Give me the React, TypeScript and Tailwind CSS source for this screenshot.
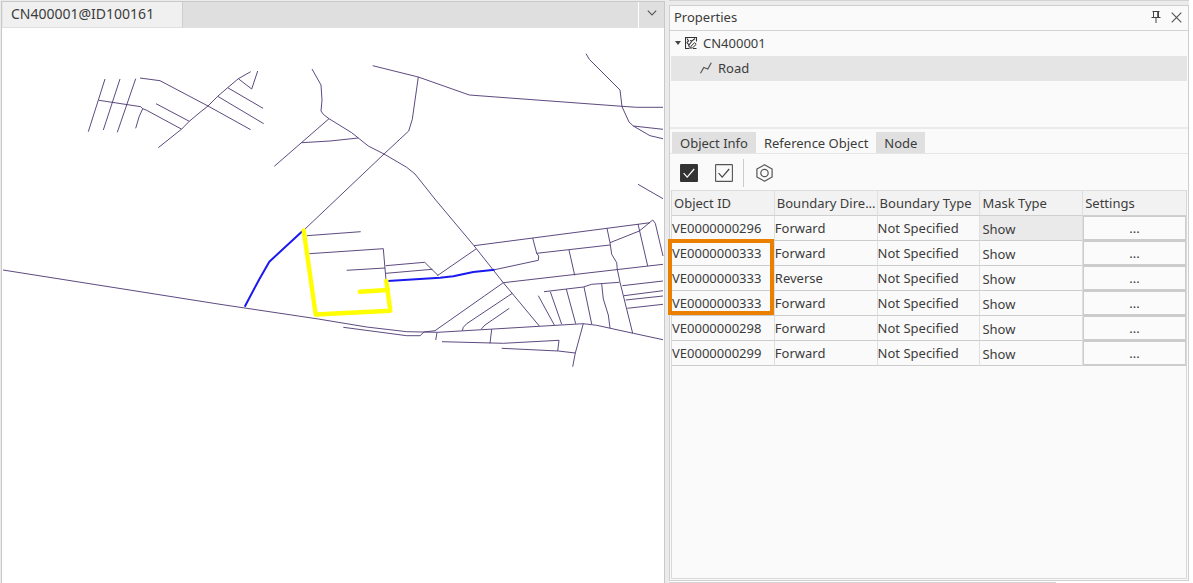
import { useState } from "react";

interface Boundary {
  id: string;
  direction: string;
  type: string;
  mask: string;
}

const COLUMNS = [
  "Object ID",
  "Boundary Dire...",
  "Boundary Type",
  "Mask Type",
  "Settings",
];

const TABS = ["Object Info", "Reference Object", "Node"];

const ROWS: Boundary[] = [
  { id: "VE0000000296", direction: "Forward", type: "Not Specified", mask: "Show" },
  { id: "VE0000000333", direction: "Forward", type: "Not Specified", mask: "Show" },
  { id: "VE0000000333", direction: "Reverse", type: "Not Specified", mask: "Show" },
  { id: "VE0000000333", direction: "Forward", type: "Not Specified", mask: "Show" },
  { id: "VE0000000298", direction: "Forward", type: "Not Specified", mask: "Show" },
  { id: "VE0000000299", direction: "Forward", type: "Not Specified", mask: "Show" },
];

const ROADS = [
  "105,79 88.3,131.7",
  "120,79 103.3,130",
  "135.7,78.7 117.3,132.3",
  "99,100.3 140.7,106.7 142.7,108.7 146.7,110.3 181.3,129",
  "142.7,108.7 139,117 135.7,128.3",
  "140,78 160,80.7 208,106 250.7,129.7",
  "156,103.7 189.3,121.3",
  "158.3,147.7 181.7,129 189.3,121.3 200,112.3 208,106 217.7,96.3 227.7,87.7 238.3,78.7 250.7,71.7",
  "238.3,78.7 251.7,89 257.7,71",
  "227.7,87.7 263,108.3",
  "217.7,96.3 263.7,123.7",
  "312,69 321,85 322,100 321,111 323.3,114.3 329,118.7 351.7,132.7 358.3,138 368.3,146 384,154 406.7,167.3 415,174 435.7,200 474,245.7 503.3,282.7 539.3,326",
  "329,118.7 274.3,166.3",
  "301.7,142.7 330,141 358.3,138",
  "372.7,65.7 418.3,77 469.3,95 500,97.3 622,106.3 636.7,107.3 663,107.3",
  "418.3,77 412.3,119.3 408.7,131 384,154 304,230",
  "586,53.7 589.3,59.3 620,90 622,106.7 629,122 633.3,126 650,135.7 663,138.7",
  "633.3,126 663,129.3",
  "638,184.3 663,198.7",
  "306.7,235.7 360.7,231.7",
  "309.3,253.7 383.3,248.7 386,280",
  "346.7,270.3 385,268",
  "385.7,265.7 424.7,262.3 438.3,275.7",
  "386,273.3 432.3,269.3",
  "437.3,275.7 476,249",
  "494.7,269.7 538.3,260.3 538.7,256 536.7,253.3 532.7,238",
  "474,245.7 650,222.7",
  "610,242.7 639.3,231 652.7,220 655.3,223.3 663,256",
  "536.7,253.3 610,245",
  "569,250 574.7,275.3",
  "607,228.3 610,242.7 611.7,254.3 616.7,262.7 617.3,269.3 620,282.3 632.7,333.3",
  "638,224 647.7,266",
  "503.3,282.7 663,264.3",
  "3,270 220,304.3 318.3,319 366.7,327 406.7,331.7 438,332.3 583.3,323.7 596.7,325.3 633.3,333.3 663,339.7",
  "343.3,327.3 406.7,335.7 420,335.7 424,332 435,330.7 503.3,282.7",
  "462.3,330.7 463.3,327.3 466.7,323.7 512.3,293.3",
  "481.3,329 485,325 509.3,308.3",
  "538.3,295.7 554.3,325",
  "544,291.7 583.3,287 591.7,284.3 619.3,282.3",
  "550.3,291.7 561.7,324.3",
  "566.3,289 575.7,323.7",
  "584,287 591.7,324",
  "601.7,284 603.3,299 608.3,315 610,328",
  "622.3,285.7 663,281",
  "624,295.7 663,290.7",
  "625.7,300 663,296",
  "627.3,308.3 663,304.3",
  "437,332.7 435.7,340",
  "442,341.7 503.3,343.3 559,340.3 557.7,351",
  "491.7,329.3 490,343.3",
  "501.7,348.3 558.3,351 575.3,353",
  "583.3,323.7 575.3,353 572.7,366.7",
];

const BLUE_ROADS = [
  "244.7,306.7 259.3,279.3 269.3,261.7 302.3,231.3",
  "387.7,281 440,277.7 453.3,276.3 473.3,272 494.7,269.7",
];

const YELLOW_ROADS = [
  "303.7,230.5 315.7,314.5 390.3,310.7 386.3,281",
  "359.7,291.7 387.7,290",
];

function RoadMap() {
  return (
    <svg
      viewBox="2 28 662 555"
      preserveAspectRatio="xMinYMin slice"
      className="h-full w-full"
      fill="none"
      role="img"
      aria-label="Road map"
    >
      <g stroke="#4b3570" strokeWidth="0.9">
        {ROADS.map((points) => (
          <polyline key={points} points={points} />
        ))}
      </g>
      <g stroke="#1a1aee" strokeWidth="2" strokeLinejoin="round">
        {BLUE_ROADS.map((points) => (
          <polyline key={points} points={points} />
        ))}
      </g>
      <g stroke="#ffff00" strokeWidth="4.4" strokeLinecap="round" strokeLinejoin="round">
        {YELLOW_ROADS.map((points) => (
          <polyline key={points} points={points} />
        ))}
      </g>
    </svg>
  );
}

function PinIcon() {
  return (
    <svg width="10" height="12" viewBox="0 0 10 12" fill="none" stroke="#444">
      <path d="M1.5 0.5h7M2.5 0.5v6M7.5 0.5v6M0.5 6.5h9M5 7v5" />
      <path d="M6.5 1v5" strokeWidth="0.8" />
    </svg>
  );
}

function CloseIcon() {
  return (
    <svg width="11" height="11" viewBox="0 0 11 11" fill="none" stroke="#555" strokeWidth="1.2">
      <path d="M0.7 0.7l9.6 9.6M10.3 0.7L0.7 10.3" />
    </svg>
  );
}

function DatasetIcon() {
  return (
    <svg width="12" height="12" viewBox="0 0 12 12" fill="none" stroke="#333">
      <path d="M11.5 4.5v-4h-11v11h4" strokeWidth="1.1" />
      <path d="M2 1.5l1.5 2.5L2 5.5l1.5 2 1 3M10 1.5L7 4 5 3.5M7 4L4 8" strokeWidth="1.1" />
      <path d="M5.5 11.3l.6-2.2 3.4-3.4 1.7 1.6-3.5 3.4zM8 11.5h3.5" />
    </svg>
  );
}

function LineIcon() {
  return (
    <svg width="12" height="12" viewBox="0 0 12 12" fill="none" stroke="#555" strokeWidth="1.2">
      <path d="M0.5 11.3L3.8 5.5l4 1.5L11.3 0.7" />
    </svg>
  );
}

function CheckIcon({ filled }: { filled?: boolean }) {
  return (
    <svg width="18" height="18" viewBox="0 0 18 18" fill="none">
      <rect
        x="0.6"
        y="0.6"
        width="16.8"
        height="16.8"
        rx="0.5"
        fill={filled ? "#333" : "none"}
        stroke={filled ? "#333" : "#555"}
        strokeWidth="1.1"
      />
      <path d="M3.6 9.2l3.6 4L14.2 5" stroke={filled ? "#fff" : "#444"} strokeWidth="1.2" />
    </svg>
  );
}

function NutIcon() {
  return (
    <svg width="17" height="18" viewBox="0 0 17 18" fill="none" stroke="#555" strokeWidth="1.2">
      <path d="M8.5 0.8l7.6 4.2v8l-7.6 4.2L0.9 13V5z" strokeLinejoin="round" />
      <circle cx="8.5" cy="9" r="3.7" />
    </svg>
  );
}

function ReferenceTable() {
  return (
    <div className="relative">
      <table className="w-full table-fixed border-separate border-spacing-0 border-t border-[#dcdcdc] text-left">
        <thead>
          <tr>
            {COLUMNS.map((name) => (
              <th
                key={name}
                scope="col"
                className="h-[25px] border-r border-b border-r-[#dfdfdf] border-b-[#d0d0d0] bg-[#f2f2f2] p-0 pl-0.5 font-normal whitespace-nowrap last:border-r-0"
              >
                {name}
              </th>
            ))}
          </tr>
        </thead>
        <tbody>
          {ROWS.map((row, i) => (
            <tr key={i}>
              <td className="h-[25px] border-r border-b border-r-[#dfdfdf] border-b-[#cccccc] p-0">
                {row.id}
              </td>
              <td className="border-r border-b border-r-[#dfdfdf] border-b-[#cccccc] p-0">
                {row.direction}
              </td>
              <td className="border-r border-b border-r-[#dfdfdf] border-b-[#cccccc] p-0">
                {row.type}
              </td>
              <td
                className={`border-r border-b border-r-[#dfdfdf] border-b-[#cccccc] p-0 pt-0.5 pl-0.5 ${
                  i === 0 ? "bg-[#eaeaea]" : ""
                }`}
              >
                {row.mask}
              </td>
              <td className="border-b border-[#cccccc] p-0">
                <button
                  type="button"
                  aria-label={`Settings for ${row.id}`}
                  className="block h-6 w-full border border-[#cccccc] bg-[#fbfbfb]"
                >
                  ...
                </button>
              </td>
            </tr>
          ))}
        </tbody>
      </table>
      {/* Marks the object that is referenced three times */}
      <div className="pointer-events-none absolute top-[49px] -left-[4px] h-[76px] w-[106px] border-4 border-[#ea7f00]" />
    </div>
  );
}

function PropertiesPanel() {
  const [tab, setTab] = useState("Reference Object");

  return (
    <aside className="flex flex-1 flex-col border border-[#cfcfcf] bg-[#fafafa]">
      <header className="flex h-[25px] items-center border-b border-[#d3d3d3] pr-1.5 pb-0.5 pl-1">
        <h2 className="flex-1">Properties</h2>
        <button type="button" aria-label="Pin" className="mr-2.5">
          <PinIcon />
        </button>
        <button type="button" aria-label="Close">
          <CloseIcon />
        </button>
      </header>

      {/* Layer tree */}
      <ul className="h-[98px] border-b-2 border-[#ebebeb] px-px">
        <li>
          <div className="flex h-[25px] items-center gap-1 pb-0.5 pl-1">
            <svg width="6" height="4" viewBox="0 0 6 4" fill="#444">
              <path d="M0 0h6L3 4z" />
            </svg>
            <DatasetIcon />
            <span className="pl-0.5">CN400001</span>
          </div>
          <ul>
            <li className="flex h-[25px] items-center gap-1.5 bg-[#e5e5e5] pb-0.5 pl-[29px]">
              <LineIcon />
              Road
            </li>
          </ul>
        </li>
      </ul>

      <div role="tablist" className="mt-[3px] flex h-[22px] border-b border-[#e6e6e6] pl-0.5">
        {TABS.map((name) => (
          <button
            key={name}
            type="button"
            role="tab"
            aria-selected={name === tab}
            onClick={() => setTab(name)}
            className={`px-2 ${name === tab ? "bg-[#fafafa]" : "bg-[#e0e0e0]"}`}
          >
            {name}
          </button>
        ))}
      </div>

      <div className="flex h-9 items-center pt-0.5 pl-2.5">
        <button type="button" aria-label="Select all" className="mr-[17px]">
          <CheckIcon filled />
        </button>
        <button type="button" aria-label="Invert selection" className="mr-2.5">
          <CheckIcon />
        </button>
        <span className="mr-3 h-7 w-px bg-[#cccccc]" />
        <button type="button" aria-label="Options">
          <NutIcon />
        </button>
      </div>

      <div className="mx-px mb-px flex-1 border-r border-b border-l border-[#d8d8d8]">
        <ReferenceTable />
      </div>
    </aside>
  );
}

export default function App() {
  return (
    <div className="flex h-screen bg-white pr-1 font-['Noto_Sans','Open_Sans',sans-serif] text-[13px] leading-5 text-[#3c3c3c]">
      <div className="flex min-w-0 flex-1 bg-[#ebebeb] pt-px pr-1 pl-px">
        <main className="flex min-w-0 flex-1 flex-col border-t border-r border-l border-[#c9c9c9] bg-white">
          <div className="flex h-[26px] shrink-0 bg-[#dfdfdf]">
            <div className="border-r border-b border-l border-[#cfcfcf] border-b-[#dfdfdf] border-l-[#e6e6e6] bg-[#f0f0f0] pt-0.5 pr-7 pl-2 text-sm">
              CN400001@ID100161
            </div>
            <button
              type="button"
              aria-label="Open windows"
              className="ml-auto flex w-[26px] items-center justify-center border-l border-white pb-1"
            >
              <svg width="10" height="6" viewBox="0 0 10 6" fill="none" stroke="#555" strokeWidth="1.1">
                <path d="M0.8 0.7L5 4.9 9.2 0.7" />
              </svg>
            </button>
          </div>
          <div className="min-h-0 flex-1">
            <RoadMap />
          </div>
        </main>
      </div>

      <div className="flex w-[520px] shrink-0 flex-col">
        <div className="h-[5px] border-t border-[#d3d3d3] bg-[#ebebeb]" />
        <PropertiesPanel />
        <div className="mt-px mr-[133px] h-px bg-[#d3d3d3]" />
      </div>
    </div>
  );
}
